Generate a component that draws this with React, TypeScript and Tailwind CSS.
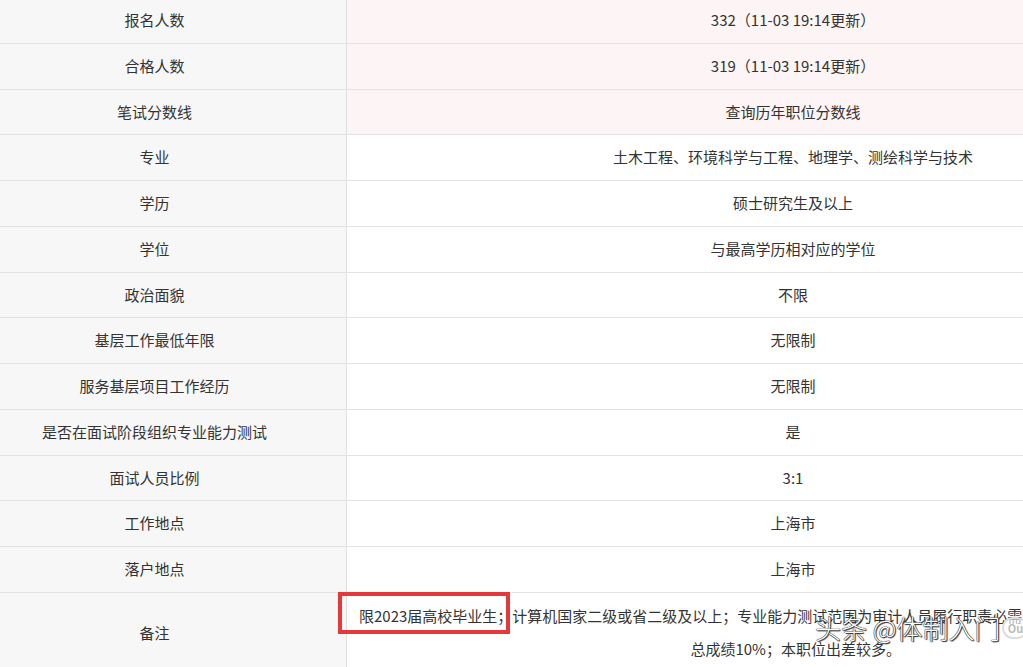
const rows: { label: string; value: string; tint?: boolean }[] = [
  { label: "报名人数", value: "332（11-03 19:14更新）", tint: true },
  { label: "合格人数", value: "319（11-03 19:14更新）", tint: true },
  { label: "笔试分数线", value: "查询历年职位分数线", tint: true },
  { label: "专业", value: "土木工程、环境科学与工程、地理学、测绘科学与技术" },
  { label: "学历", value: "硕士研究生及以上" },
  { label: "学位", value: "与最高学历相对应的学位" },
  { label: "政治面貌", value: "不限" },
  { label: "基层工作最低年限", value: "无限制" },
  { label: "服务基层项目工作经历", value: "无限制" },
  { label: "是否在面试阶段组织专业能力测试", value: "是" },
  { label: "面试人员比例", value: "3:1" },
  { label: "工作地点", value: "上海市" },
  { label: "落户地点", value: "上海市" },
];

export default function App() {
  return (
    <div
      className="w-full h-screen overflow-hidden bg-white text-[15px] text-[#333]"
      style={{ fontFamily: '"Noto Sans CJK SC", "Noto Sans", sans-serif' }}
    >
      <div className="w-[1239px] -mt-[2px] flex flex-col">
        {rows.map((r) => (
          <div key={r.label} className="flex h-[45.75px] border-b border-[#e3e3e3]">
            <div className="w-[347px] shrink-0 bg-[#f7f7f7] border-r border-[#e0e0e0] pr-[37px] flex items-center justify-center">
              {r.label}
            </div>
            <div
              className={
                "flex-1 flex items-center justify-center " +
                (r.tint ? "bg-[#fdf5f5]" : "bg-white")
              }
            >
              {r.value}
            </div>
          </div>
        ))}

        {/* 备注 */}
        <div className="flex h-[80px]">
          <div className="w-[347px] shrink-0 bg-[#f7f7f7] border-r border-[#e0e0e0] pr-[37px] flex items-center justify-center">
            备注
          </div>
          <div className="relative flex-1 bg-white px-3 pt-[6px] text-center leading-[33px] whitespace-nowrap">
            限2023届高校毕业生；计算机国家二级或省二级及以上；专业能力测试范围为审计人员履行职责必需的专业知识和业务能力，成绩占
            <br />
            总成绩10%；本职位出差较多。
            <div className="absolute -left-[9px] -top-[1px] w-[172px] h-[42px] border-4 border-[#e5383b]" />
            <div className="absolute left-[468px] top-[22px] flex items-center gap-[2px]">
              <span className="text-[26px] leading-none text-white font-light [text-shadow:0_0_1px_#000,0_0_1px_#000,1px_1px_1px_#333]">
                头条 @体制入门
              </span>
              <span className="w-[26px] h-[22px] rounded-full border-2 border-[#ddd] bg-white/60 text-[11px] leading-[18px] text-[#bbb] text-center font-bold">
                Ou
              </span>
            </div>
          </div>
        </div>
      </div>
    </div>
  );
}
